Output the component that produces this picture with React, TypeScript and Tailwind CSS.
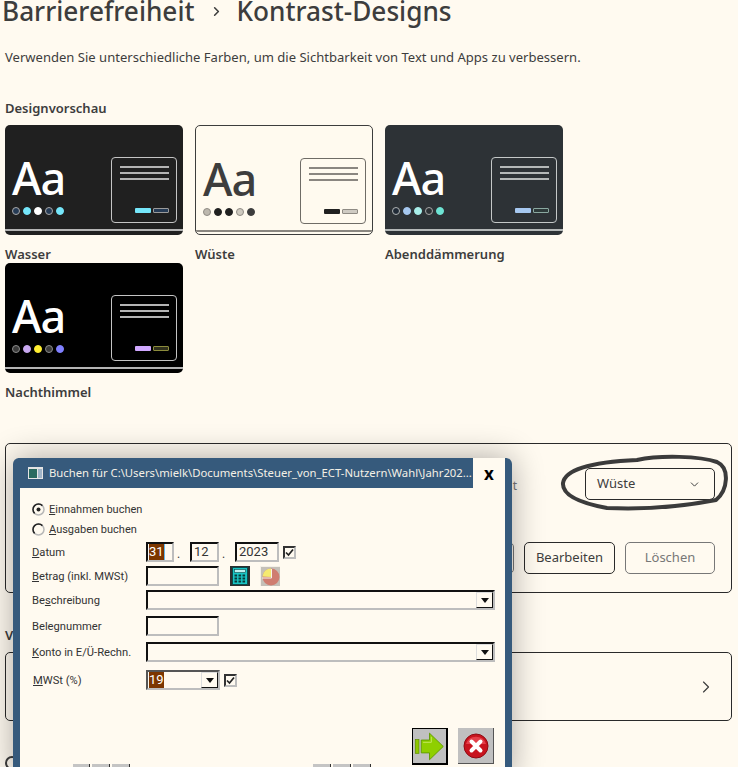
import React from "react";
import { ChevronDown, ChevronRight } from "lucide-react";

interface ThemeTile {
  name: string;
  tile: string;
  aa: string;
  frame: string;
  line: string;
  dots: string[];
  fill: string;
  outline: string;
}

const themes: ThemeTile[] = [
  {
    name: "Wasser",
    tile: "bg-[#202020]",
    aa: "text-white",
    frame: "border-[#c4c4c4]",
    line: "bg-[#b4b4b4]",
    dots: [
      "bg-[#263b55] border-[#a8a8a8]",
      "bg-[#75e6fa] border-[#75e6fa]",
      "bg-white border-white",
      "bg-[#263b55] border-[#a8a8a8]",
      "bg-[#75e6fa] border-[#75e6fa]",
    ],
    fill: "bg-[#75e6fa]",
    outline: "bg-[#263b55] border-[#9a9a9a]",
  },
  {
    name: "Wüste",
    tile: "bg-[#fffaef] border border-[#3d3d3d]",
    aa: "text-[#3d3d3d]",
    frame: "border-[#6f6c66]",
    line: "bg-[#8a8680]",
    dots: [
      "bg-[#bdb8ae] border-[#8f8b84]",
      "bg-[#202020] border-[#202020]",
      "bg-[#202020] border-[#202020]",
      "bg-[#cfcac0] border-[#8f8b84]",
      "bg-[#3d3d3d] border-[#3d3d3d]",
    ],
    fill: "bg-[#202020]",
    outline: "bg-[#cfcbc3] border-[#8f8b84]",
  },
  {
    name: "Abenddämmerung",
    tile: "bg-[#2d3236]",
    aa: "text-white",
    frame: "border-[#c4c8c8]",
    line: "bg-[#b4b8b8]",
    dots: [
      "bg-[#202a36] border-[#b0b4b4]",
      "bg-[#a6c8f0] border-[#a6c8f0]",
      "bg-[#a8eeea] border-[#a8eeea]",
      "bg-[#2d3236] border-[#a8a8a8]",
      "bg-[#6ee4d4] border-[#6ee4d4]",
    ],
    fill: "bg-[#a6c8f0]",
    outline: "bg-[#2d3a3a] border-[#8aa8a0]",
  },
  {
    name: "Nachthimmel",
    tile: "bg-black",
    aa: "text-white",
    frame: "border-[#c4c4c4]",
    line: "bg-[#b4b4b4]",
    dots: [
      "bg-[#3c3c3c] border-[#8a8a8a]",
      "bg-[#c8a8f0] border-[#c8a8f0]",
      "bg-[#ffee32] border-[#ffee32]",
      "bg-[#3c3c3c] border-[#8a8a8a]",
      "bg-[#8080ff] border-[#8080ff]",
    ],
    fill: "bg-[#d0a8ff]",
    outline: "bg-[#30301c] border-[#8c8c3c]",
  },
];

const Tile: React.FC<{ theme: ThemeTile }> = ({ theme }) => (
  <div className="h-[138px] w-[178px]">
    <div
      className={`box-border flex h-[110px] w-[178px] flex-col overflow-hidden rounded-[5px] ${theme.tile}`}
    >
      <div className="flex h-[104px] justify-between pl-[6px] pr-[6px] pt-[32px]">
        <div className="flex flex-col">
          <span
            className={`ml-[1px] h-[50px] text-[45px] font-medium leading-[42px] tracking-[-1px] ${theme.aa}`}
          >
            Aa
          </span>
          <div className="ml-[1px] flex gap-[3px]">
            {theme.dots.map((dot, i) => (
              <span key={i} className={`h-[8px] w-[8px] rounded-full border ${dot}`} />
            ))}
          </div>
        </div>
        <div
          className={`box-border flex h-[66px] w-[66px] flex-col rounded-[4px] border-[1.5px] px-[7.5px] pt-[7.5px] ${theme.frame}`}
        >
          <div className="flex flex-col gap-[4px]">
            <div className={`h-[2px] ${theme.line}`} />
            <div className={`h-[2px] ${theme.line}`} />
            <div className={`h-[2px] ${theme.line}`} />
          </div>
          <div className="mt-[28px] flex justify-end gap-[2px]">
            <div className={`h-[5px] w-[16px] shrink-0 rounded-[1px] ${theme.fill}`} />
            <div className={`box-border h-[5px] w-[16px] shrink-0 rounded-[1px] border ${theme.outline}`} />
          </div>
        </div>
      </div>
      <div className={`h-[2px] shrink-0 ${theme.line}`} />
    </div>
    <p className="mt-[10px] text-[13px] font-semibold leading-[18px] text-[#3d3d3d]">
      {theme.name}
    </p>
  </div>
);

const sunken =
  "box-border h-[20px] shrink-0 border-2 border-t-[#111] border-l-[#111] border-r-[#bdbdbd] border-b-[#bdbdbd] bg-[#fffaf0]";

const CheckBox = () => (
  <span className="box-border flex h-[13px] w-[13px] items-center justify-center border-2 border-t-[#333] border-l-[#333] border-r-[#bdbdbd] border-b-[#bdbdbd] bg-[#fffaf0]">
    <svg viewBox="0 0 9 9" className="h-[9px] w-[9px]">
      <path d="M1 4.5 L3.5 7 L8 1.5" fill="none" stroke="#222" strokeWidth="1.7" />
    </svg>
  </span>
);

const DropButton = () => (
  <span className="box-border flex h-[16px] w-[17px] items-center justify-center border border-t-[#ddd] border-l-[#ddd] border-r-[#111] border-b-[#111] bg-[#fffaf0]">
    <svg viewBox="0 0 8 5" className="h-[5px] w-[8px]">
      <path d="M0 0 H8 L4 5 Z" fill="#111" />
    </svg>
  </span>
);

const ComboField: React.FC<{ className?: string; children?: React.ReactNode }> = ({
  className,
  children,
}) => (
  <div className={`${sunken} flex items-center justify-between ${className ?? ""}`}>
    <span className="flex">{children}</span>
    <DropButton />
  </div>
);

const Radio: React.FC<{ checked?: boolean }> = ({ checked }) => (
  <svg viewBox="0 0 13 13" className="h-[13px] w-[13px]">
    <circle cx="6.5" cy="6.5" r="5.5" fill="#fffaf0" stroke="#b8b8b8" strokeWidth="1.5" />
    <path d="M2.6 10.4 A5.5 5.5 0 0 1 10.4 2.6" fill="none" stroke="#222" strokeWidth="1.5" />
    {checked && <circle cx="6.5" cy="6.5" r="2" fill="#222" />}
  </svg>
);

const FieldRow: React.FC<{ className: string; label: React.ReactNode; children: React.ReactNode }> = ({
  className,
  label,
  children,
}) => (
  <div className={`flex h-[20px] items-center ${className}`}>
    <span className="w-[114px] shrink-0 pt-[2px] text-[11.2px] text-[#333]">{label}</span>
    {children}
  </div>
);

const CalculatorIcon = () => (
  <svg viewBox="0 0 20 20" className="h-[20px] w-[20px]">
    <rect x="0" y="0" width="20" height="20" fill="#2e2e2e" />
    <rect x="2.5" y="1.5" width="15" height="17" fill="#18c4c4" stroke="#0c4a4a" />
    <rect x="4.5" y="3.5" width="11" height="3" fill="#bff0f0" stroke="#0c4a4a" strokeWidth="0.6" />
    {[8.5, 11.5, 14.5].map((y) =>
      [4.5, 8.5, 12.5].map((x) => (
        <rect key={`${x}-${y}`} x={x} y={y} width="2.6" height="2" fill="#083838" />
      ))
    )}
  </svg>
);

const PieIcon = () => (
  <svg viewBox="0 0 20 20" className="h-[20px] w-[20px]">
    <rect width="20" height="20" fill="#c4c0b8" />
    <path d="M0 20 V0 H20 V1 H1 V20 Z" fill="#f4f0e6" />
    <circle cx="11" cy="11" r="8.5" fill="#cf7d70" />
    <path d="M11 11 L11 2.5 A8.5 8.5 0 0 0 2.5 10.5 Z" fill="#f5ea70" />
    <path d="M2 12 H11.5 V3" fill="none" stroke="#f7f3e8" strokeWidth="1" />
  </svg>
);

const ArrowIcon = () => (
  <svg viewBox="0 0 36 32" className="h-[32px] w-[34px]">
    <rect x="2.5" y="9" width="4" height="15" fill="#8fc800" stroke="#5f9000" strokeWidth="0.8" />
    <path d="M9 9.5 H18 V2 L33 16.5 L18 31 V23.5 H9 Z" fill="#8fcf00" stroke="#5f9a00" strokeWidth="1" />
    <path d="M11 12 H20 V6" fill="none" stroke="#c6e860" strokeWidth="1" />
  </svg>
);

const CancelIcon = () => (
  <svg viewBox="0 0 26 26" className="h-[26px] w-[26px]">
    <circle cx="13" cy="13" r="12" fill="#c8141e" stroke="#8e0c14" />
    <path d="M3 11 A10.5 10.5 0 0 1 23 11 Z" fill="#e4404a" />
    <path d="M8.5 8.5 L17.5 17.5 M17.5 8.5 L8.5 17.5" stroke="#fff" strokeWidth="4" strokeLinecap="round" />
  </svg>
);

const BookingDialog = () => (
  <div className="absolute left-[13px] top-[458px] box-border h-[320px] w-[499px] overflow-hidden rounded-t-[6px] border-x-[7px] border-[#365a7c] bg-[#365a7c] shadow-[0_0_32px_rgba(0,0,0,0.33)]">
    <div className="flex h-[30px] items-center">
      <svg viewBox="0 0 15 12" className="ml-[8px] h-[12px] w-[15px] shrink-0">
        <rect width="15" height="12" fill="#e4e4e4" />
        <rect x="1" y="2" width="8" height="9" fill="#2a6a60" />
        <rect x="10" y="2" width="4" height="9" fill="#9fb4c8" />
      </svg>
      <span className="ml-[6px] w-[424px] shrink-0 whitespace-nowrap text-[11.3px] text-[#f4f0e6]">
        Buchen für C:\Users\mielk\Documents\Steuer_von_ECT-Nutzern\Wahl\Jahr202...
      </span>
      <span className="flex h-[30px] w-[32px] shrink-0 items-center justify-center bg-[#fffaf0] text-[17px] font-bold leading-none text-black">
        x
      </span>
    </div>
    <div className="h-[290px] bg-[#fffaf0] pl-[12px] pr-[10px] pt-[11px] font-['Roboto',sans-serif]">
      <div className="flex h-[20px] items-center gap-[4px] text-[11px] text-[#333]">
        <Radio checked />
        <span className="pt-[2px]">
          <u>E</u>innahmen buchen
        </span>
      </div>
      <div className="flex h-[20px] items-center gap-[4px] text-[11px] text-[#333]">
        <Radio />
        <span className="pt-[2px]">
          <u>A</u>usgaben buchen
        </span>
      </div>

      <FieldRow
        className="mt-[3px]"
        label={
          <>
            <u>D</u>atum
          </>
        }
      >
        <div className={`${sunken} flex w-[28px] items-center pl-[1px] text-[13px] text-white`}>
          <span className="bg-[#7c3600] leading-[16px]">31</span>
          <span className="h-[16px] w-[1px] bg-[#60b8f0]" />
        </div>
        <span className="w-[16px] pl-[3px] pt-[4px] text-[12px] text-[#333]">.</span>
        <div className={`${sunken} w-[29px] pl-[2px] text-[13px] leading-[16px] text-[#333]`}>12</div>
        <span className="w-[16px] pl-[3px] pt-[4px] text-[12px] text-[#333]">.</span>
        <div className={`${sunken} w-[44px] pl-[2px] text-[13px] leading-[16px] text-[#333]`}>2023</div>
        <span className="ml-[4px]">
          <CheckBox />
        </span>
      </FieldRow>

      <FieldRow
        className="mt-[4px]"
        label={
          <>
            <u>B</u>etrag (inkl. MWSt)
          </>
        }
      >
        <div className={`${sunken} w-[73px]`} />
        <span className="ml-[11px]">
          <CalculatorIcon />
        </span>
        <span className="ml-[10px]">
          <PieIcon />
        </span>
      </FieldRow>

      <FieldRow
        className="mt-[4px]"
        label={
          <>
            Be<u>s</u>chreibung
          </>
        }
      >
        <ComboField className="w-[349px]" />
      </FieldRow>

      <FieldRow
        className="mt-[6px]"
        label={
          <>
            Bele<u>g</u>nummer
          </>
        }
      >
        <div className={`${sunken} w-[73px]`} />
      </FieldRow>

      <FieldRow
        className="mt-[6px]"
        label={
          <>
            <u>K</u>onto in E/Ü-Rechn.
          </>
        }
      >
        <ComboField className="w-[349px]" />
      </FieldRow>

      <FieldRow
        className="mt-[8px]"
        label={
          <span className="ml-[1px]">
            <u>M</u>WSt (%)
          </span>
        }
      >
        <ComboField className="w-[74px] !border-t-[#555] !border-l-[#555]">
          <span className="ml-[1px] bg-[#7c3600] text-[13px] leading-[16px] text-white">19</span>
        </ComboField>
        <span className="ml-[4px]">
          <CheckBox />
        </span>
      </FieldRow>

      <div className="mt-[38px] flex h-[36px] justify-end gap-[10px] pr-[1px]">
        <div className="box-border flex h-[37px] w-[36px] items-center justify-center border border-r-2 border-b-2 border-black bg-[#c0c0c0]">
          <ArrowIcon />
        </div>
        <div className="flex h-[36px] w-[36px] items-center justify-center border-r border-b border-[#555] bg-[#c0c0c0]">
          <CancelIcon />
        </div>
      </div>

      <div className="flex gap-[2px] pl-[41px]">
        <span className="h-[10px] w-[17px] border-r border-[#333] bg-[#c4c4c4]" />
        <span className="h-[10px] w-[18px] border-r border-[#333] bg-[#c4c4c4]" />
        <span className="h-[10px] w-[18px] border-r border-[#333] bg-[#c4c4c4]" />
        <span className="ml-[181px] h-[10px] w-[18px] border-r border-[#333] bg-[#c4c4c4]" />
        <span className="h-[10px] w-[18px] border-r border-[#333] bg-[#c4c4c4]" />
        <span className="h-[10px] w-[18px] border-r border-[#333] bg-[#c4c4c4]" />
      </div>
    </div>
  </div>
);

export default function App() {
  return (
    <div className="relative h-[767px] w-[738px] overflow-hidden bg-[#fffaf0] font-['Noto_Sans',sans-serif] text-[#3d3d3d]">
      <div className="-mt-[8px] flex h-[38px] items-center pl-[2px] text-[26.2px] font-medium leading-[38px]">
        <span>Barrierefreiheit</span>
        <ChevronRight className="ml-[14px] mr-[13px] h-[15px] w-[15px]" strokeWidth={2.5} />
        <span>Kontrast-Designs</span>
      </div>

      <p className="ml-[5px] mt-[17px] text-[13.06px] leading-[20px]">
        Verwenden Sie unterschiedliche Farben, um die Sichtbarkeit von Text und Apps zu verbessern.
      </p>

      <p className="ml-[5px] mt-[31px] text-[13px] font-semibold leading-[20px]">Designvorschau</p>

      <div className="ml-[5px] mt-[7px] grid grid-cols-[178px_178px_178px] gap-x-[12px]">
        {themes.map((theme) => (
          <Tile key={theme.name} theme={theme} />
        ))}
      </div>

      <div className="relative ml-[5px] mt-[42px] box-border h-[150px] w-[727px] rounded-[5px] border border-[#2a2a2a] pr-[16px] pt-[24px]">
        <div className="flex items-center justify-end">
          <span className="mr-[68px] mt-[4px] text-[12px] text-[#777]">t</span>
          <div className="box-border flex h-[32px] w-[130px] items-center justify-between rounded-[5px] border border-[#2a2a2a] pl-[11px] pr-[13px] text-[13px]">
            <span>Wüste</span>
            <ChevronDown className="h-[13px] w-[13px]" strokeWidth={1.8} />
          </div>
        </div>
        <div className="mt-[42px] flex justify-end gap-[10px]">
          <div className="box-border h-[32px] w-[60px] rounded-[5px] border border-[#777]" />
          <div className="box-border flex h-[32px] w-[91px] items-center justify-center rounded-[5px] border border-[#2a2a2a] text-[13px]">
            Bearbeiten
          </div>
          <div className="box-border flex h-[32px] w-[90px] items-center justify-center rounded-[5px] border border-[#777] text-[13px] text-[#777]">
            Löschen
          </div>
        </div>
      </div>

      <p className="ml-[5px] mt-[32px] text-[13px] font-semibold leading-[20px]">V</p>

      <div className="ml-[5px] mt-[7px] box-border flex h-[69px] w-[727px] items-center justify-end rounded-[5px] border border-[#2a2a2a] pr-[15px]">
        <ChevronRight className="h-[20px] w-[20px]" strokeWidth={1.4} />
      </div>

      <span className="ml-[5px] mt-[35px] block h-[14px] w-[14px] rounded-full border-2 border-[#3d3d3d]" />

      <BookingDialog />

      <svg
        viewBox="555 450 180 65"
        className="absolute left-[555px] top-[450px] h-[65px] w-[180px]"
      >
        <path
          d="M637 460 C660 455 700 456 717 462 C730 468 728 490 716 500 C690 505 650 510 607 508 C580 503 562 495 563 483 C565 470 590 462 637 460 Z"
          fill="none"
          stroke="#3b3b3b"
          strokeWidth="4"
        />
      </svg>
    </div>
  );
}
